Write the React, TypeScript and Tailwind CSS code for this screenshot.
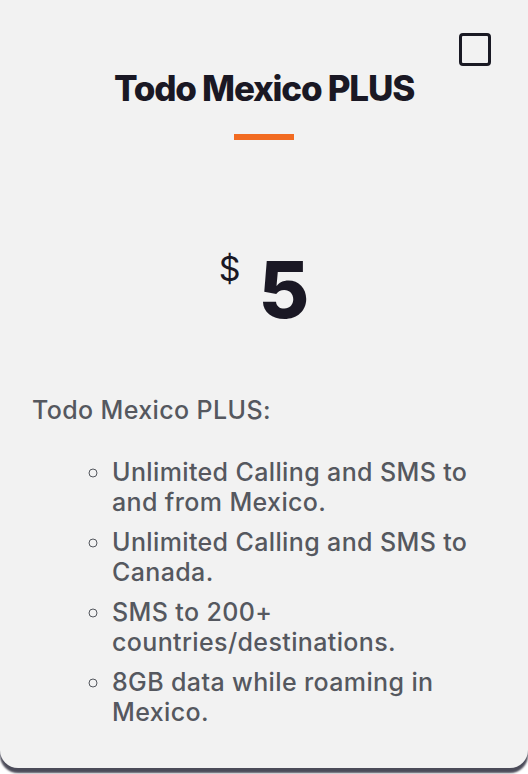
import * as React from 'react';

const features = [
  'Unlimited Calling and SMS to and from Mexico.',
  'Unlimited Calling and SMS to Canada.',
  'SMS to 200+ countries/destinations.',
  '8GB data while roaming in Mexico.',
];

export default function App() {
  return (
    <div className="min-h-screen bg-white" style={{ fontFamily: 'Inter, "Open Sans", sans-serif' }}>
      <div className="relative bg-[#f2f2f2] rounded-b-[18px] shadow-[0_5px_2px_#4b4b59] pb-[41px]">
        <button
          type="button"
          aria-label="Select plan"
          className="absolute top-[33px] right-[37px] w-[32px] h-[33px] rounded-[4px] border-[3px] border-[#1a1a24] bg-transparent"
        />

        <h2 className="pt-[66px] text-center text-[35px] leading-[44px] font-extrabold tracking-[-0.035em] text-[#1a1824]">
          Todo Mexico PLUS
        </h2>
        <div className="mx-auto mt-[24px] h-[6px] w-[60px] bg-[#f26b21]" />

        <div className="mt-[110px] flex justify-center items-start text-[#1a1824]">
          <span className="text-[34px] leading-none mt-[2px] mr-[18px]">$</span>
          <span className="text-[78px] leading-[80px] font-extrabold">5</span>
        </div>

        <div className="mt-[65px] px-8 text-[#55585f] text-[25px] leading-[30px] font-medium tracking-[0.015em]">
          <p>Todo Mexico PLUS:</p>
          <ul className="mt-[32px] pl-[80px] list-[circle]">
            {features.map((f, i) => (
              <li key={i} className={i > 0 ? 'mt-[10px]' : ''}>
                {f}
              </li>
            ))}
          </ul>
        </div>
      </div>
    </div>
  );
}
